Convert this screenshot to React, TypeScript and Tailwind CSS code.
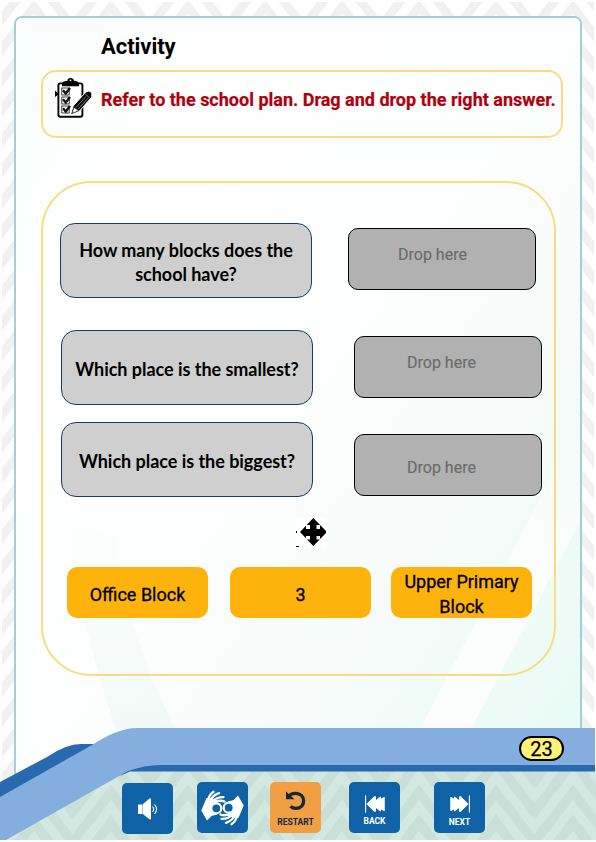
import type { ReactNode } from "react";

const roboto = "font-[Roboto,'Liberation_Sans',sans-serif]";
const lato = "font-[Lato,'Liberation_Sans',sans-serif]";

function Chevrons({ id, color, y = 0 }: { id: string; color: string; y?: number }) {
  return (
    <pattern id={id} width="77" height="61" y={y} x="34" patternUnits="userSpaceOnUse">
      <path
        d="M-4-61 38.5-6 81-61M-4-30 38.5 25 81-30M-4 0 38.5 55 81 0M-4 31 38.5 86 81 31M-4 61 38.5 116 81 61"
        fill="none"
        stroke={color}
        strokeWidth="9"
      />
    </pattern>
  );
}

function Backdrop() {
  return (
    <svg className="absolute inset-0" width="596" height="842" viewBox="0 0 596 842">
      <defs>
        <Chevrons id="zigzag" color="#f1f1f1" y={2} />
      </defs>
      <rect x="2" y="2" width="592" height="800" fill="url(#zigzag)" />
    </svg>
  );
}

function PanelShade() {
  return (
    <svg className="absolute inset-0" width="566" height="762" viewBox="0 0 566 762">
      <defs>
        <linearGradient id="mint" x1="0" y1="0" x2="1" y2="1">
          <stop offset="0" stopColor="#fafdfd" />
          <stop offset=".2" stopColor="#fefefe" />
          <stop offset=".5" stopColor="#fdfefe" />
          <stop offset=".75" stopColor="#f5fbf9" />
          <stop offset="1" stopColor="#e6fbf5" />
        </linearGradient>
        <linearGradient id="beam" x1="0" y1="0" x2="0" y2="1">
          <stop offset="0" stopColor="#fff" stopOpacity="0" />
          <stop offset=".5" stopColor="#fff" stopOpacity=".8" />
        </linearGradient>
        <linearGradient id="leaf" x1="0" y1="0" x2="0" y2="1">
          <stop offset="0" stopColor="#eef8f4" stopOpacity="0" />
          <stop offset="1" stopColor="#eef8f4" stopOpacity=".7" />
        </linearGradient>
      </defs>
      <rect width="566" height="762" fill="url(#mint)" />
      <path d="M566 400 V500 L455 711 H404Z" fill="url(#beam)" />
      <path d="M50 500Q65 610 100 711H160Q115 630 100 520Z" fill="url(#leaf)" />
    </svg>
  );
}

function ClipboardIcon() {
  return (
    <svg width="38" height="42" viewBox="0 0 38 42">
      <rect width="38" height="42" fill="#fff" />
      <path d="M0 12.5 4 16 0 19Z" />
      <rect x="3.4" y="5.4" width="24" height="33.4" rx="2" fill="#fff" stroke="#050505" strokeWidth="1.9" />
      <path d="M7 8.2V5.5Q8 3 12.5 2.8Q12.5 0 15.5 0Q18.5 0 19 2.8Q23 3 24 5.5V8.2Z" />
      <circle cx="15.5" cy="2.3" r=".9" fill="#fff" />
      {[10, 19, 28].map((y) => (
        <g key={y} fill="none" stroke="#111">
          <rect x="6.8" y={y} width="7.4" height="7" strokeWidth=".8" />
          <path d={`M8 ${y + 2.3}l2.8 3.2 4.2-5.4`} strokeWidth="2.4" />
        </g>
      ))}
      <path d="M15.5 37 18.2 28 31 13.8Q33.5 12 36.8 14.5V19L24.5 33Z" fill="#080808" stroke="#fff" strokeWidth="1" />
      <path d="M17 35.4 19 29.2 23.6 32.8Z" fill="#fff" stroke="#222" strokeWidth=".7" />
      <path d="M21 29.5 31 18.5M23 31.3 33 20.2M29.5 15.3 35 20.2" stroke="#ccc" strokeWidth=".6" />
    </svg>
  );
}

function MoveIcon() {
  return (
    <svg width="32" height="30" viewBox="0 0 32 30">
      <rect width="30" height="29" y="1" fill="#fff" />
      <path d="M0 14h1v2H0zM0 29h3v1H0z" />
      <path d="M4 15 17.3 1 30 14V16L17.3 29Z" />
      <path d="M10 8h4v4h-4zM20.5 8h3.5v4h-3.5zM10 19h4v3.5h-4zM20.5 19h3.5v3.5h-3.5z" fill="#fff" />
    </svg>
  );
}

function SpeakerIcon() {
  return (
    <svg width="24" height="24" viewBox="0 0 24 24" fill="#fff">
      <path d="M3 7.5h4v9.5H3zM7.4 7.500 14.500 1.500Q16 1 16 2.500V21.500Q16 23 14.500 22.300L7.400 16.800Z" />
      <path d="M17.500 9.500q2.400 2.700 0 5.400M19.500 7.500q4.200 4.700 0 9.400" fill="none" stroke="#fff" strokeWidth="1.1" />
    </svg>
  );
}

function SigningHand() {
  return (
    <g>
      <path d="M6.500 8 1.300 20.500 7 30.500 11.500 26 17 24.500 12 21 11 16 14 12.500 19 11.500 14.500 9Z" fill="#fff" />
      <path d="M8 12Q8.500 5 13.500 1.800M10 11.500Q12 5.500 19 3.200M12.500 11.500Q16.500 7 23.500 7.200M15 12Q20.500 9.800 24.500 11.500" fill="none" stroke="#fff" strokeWidth="2.300" strokeLinecap="round" />
      <circle cx="16.300" cy="18.300" r="5" fill="#0e62a5" stroke="#fff" strokeWidth="2.200" />
    </g>
  );
}

function SignLanguageIcon() {
  return (
    <svg width="45" height="36" viewBox="0 0 45 36">
      <SigningHand />
      <g transform="rotate(180 22.5 18)">
        <SigningHand />
      </g>
    </svg>
  );
}

function SkipIcon({ flip = false }: { flip?: boolean }) {
  return (
    <svg width="20" height="18" viewBox="0 0 20 18" className={flip ? "-scale-x-100" : ""}>
      <path d="M.6.5V17.5" stroke="#fff" strokeWidth="1.100" />
      <path d="M1.500 9 9 1.500Q10.500.5 11 2V5L15 1.800Q16 1.200 16 2.500V3.500L19 2Q19.800 1.800 19.800 3V15.200Q19.800 16.400 19 16L16 14.500V15.500Q16 16.800 15 16.200L11 13V16Q10.500 17.500 9 16.500Z" fill="#fff" />
    </svg>
  );
}

function RestartIcon() {
  return (
    <svg width="22" height="22" viewBox="0 0 22 22">
      <path d="M4 6.500Q5.500 3.300 10.500 3.300C15.500 3.200 18.600 6.500 18.600 10.800C18.600 15.500 15.500 18.400 11 18.400Q7.400 18.400 5.500 16.400" fill="none" stroke="#152933" strokeWidth="3.300" />
      <path d="M1 1.500 9.500 9.200H1Z" fill="#152933" />
    </svg>
  );
}

function Question({ children }: { children: ReactNode }) {
  return (
    <div className={`${lato} flex h-[75px] w-[252px] items-center justify-center rounded-[15px] border border-[#123e68] bg-[#cfcfcf] pt-[2px] text-center text-[18px] leading-6 font-bold tracking-[-0.03px] text-black`}>
      {children}
    </div>
  );
}

function DropZone({ className }: { className: string }) {
  return (
    <div className={`${roboto} ${className} h-[62px] w-[188px] rounded-[10px] border border-black bg-[#b1b1b1] text-[16px] leading-5 text-[#6b6b6b] [-webkit-text-stroke:0.15px_#6b6b6b]`}>
      Drop here
    </div>
  );
}

function Answer({ children }: { children: ReactNode }) {
  return (
    <div className={`${roboto} flex h-[51px] w-[141px] items-center justify-center rounded-[10px] bg-[#fdb30b] pt-[3px] text-center text-[18px] leading-[25px] text-black [-webkit-text-stroke:0.3px_#000]`}>
      <span>{children}</span>
    </div>
  );
}

export default function App() {
  return (
    <div className="relative h-[842px] w-[596px] overflow-hidden bg-white pt-4">
      <Backdrop />
      <main className="relative ml-[14px] h-[764px] w-[568px] overflow-hidden rounded-lg border-2 border-[#a3cfd6] bg-white">
        <PanelShade />
        <div className="relative flex flex-col">
          <h1 className={`${roboto} mt-[15px] ml-[85px] h-7 text-[22px] leading-7 font-bold tracking-[-0.05px] text-black`}>
            Activity
          </h1>
          <section className="mt-[9px] ml-[25px] flex h-[68px] w-[522px] rounded-[15px] border-2 border-[#f9dc82]">
            <div className="mt-[6px] ml-[12px]">
              <ClipboardIcon />
            </div>
            <p className={`${roboto} mt-[16px] ml-2 text-[18px] leading-6 font-bold whitespace-nowrap text-[#b0000d] [-webkit-text-stroke:0.2px_#b0000d]`}>
              Refer to the school plan. Drag and drop the right answer.
            </p>
          </section>
          <section className="mt-[43px] ml-[25px] h-[495px] w-[515px] rounded-[50px] border-2 border-[#f9dc82]">
            <div className="mt-10 flex h-[107px] items-start pl-[17px]">
              <Question>How many blocks does the<br />school have?</Question>
              <DropZone className="mt-[5px] ml-9 pt-4 pl-[49px]" />
            </div>
            <div className="flex h-[92px] items-start pl-[18px]">
              <Question>Which place is the smallest?</Question>
              <DropZone className="mt-[6px] ml-[41px] pt-4 pl-[52px]" />
            </div>
            <div className="flex h-[95px] items-start pl-[18px]">
              <Question>Which place is the biggest?</Question>
              <DropZone className="mt-3 ml-[41px] pt-[23px] pl-[52px]" />
            </div>
            <div className="ml-[253px] h-[50px]">
              <MoveIcon />
            </div>
            <div className="flex pl-6">
              <Answer>Office Block</Answer>
              <div className="ml-[22px]"><Answer>3</Answer></div>
              <div className="ml-5"><Answer>Upper Primary<br />Block</Answer></div>
            </div>
          </section>
        </div>
      </main>

      <footer className="relative -mt-[53px] h-[115px] w-[596px] pt-[9px]">
        <svg className="absolute inset-0" width="596" height="115" viewBox="0 727 596 115">
          <defs>
            <Chevrons id="footerZigzag" color="#d3e8e0" y={741} />
          </defs>
          <path d="M0 838 130 768H596V840H0Z" fill="#cadfd7" />
          <path d="M0 838 130 768H596V840H0Z" fill="url(#footerZigzag)" />
          <path d="M0 782 47 757Q66 744 81 744H94L70 779 0 815ZM120 776Q133 763 160 763H595V771.5H130Z" fill="#2869b0" />
          <path d="M0 797 92 745Q118 728 137 728H595V765H160Q145 765 128 771L6 840H0Z" fill="#84aedd" />
          <path d="M0 840H596V842H0Z" fill="#fff" />
        </svg>
        <div className={`${roboto} relative ml-[519px] flex h-[25px] w-[45px] items-center justify-center rounded-full border-2 border-black bg-[#fff27a] text-[20px] leading-5 text-black [-webkit-text-stroke:0.25px_#000]`}>
          23
        </div>
        <nav className={`${roboto} relative mt-[21px] flex items-start text-[8.5px] leading-[10px] font-bold text-white`}>
          <button className="mt-px ml-[122px] flex size-[51px] items-center justify-center rounded-[5px] bg-[#0e62a5] pr-px">
            <SpeakerIcon />
          </button>
          <button className="ml-[23.5px] flex size-[51px] items-center justify-center rounded-[5px] bg-[#0e62a5]">
            <SignLanguageIcon />
          </button>
          <button className="ml-[22.5px] flex size-[51px] flex-col items-center rounded-[5px] bg-[#f09f43] pt-2 text-[#152933]">
            <RestartIcon />
            <span className="mt-[5px]">RESTART</span>
          </button>
          <button className="ml-7 flex size-[51px] flex-col items-center rounded-[5px] bg-[#0e62a5] pt-[13px]">
            <SkipIcon />
            <span className="mt-[3px]">BACK</span>
          </button>
          <button className="ml-[34px] flex size-[51px] flex-col items-center rounded-[5px] bg-[#0e62a5] pt-[13px]">
            <SkipIcon flip />
            <span className="mt-1">NEXT</span>
          </button>
        </nav>
      </footer>
    </div>
  );
}
